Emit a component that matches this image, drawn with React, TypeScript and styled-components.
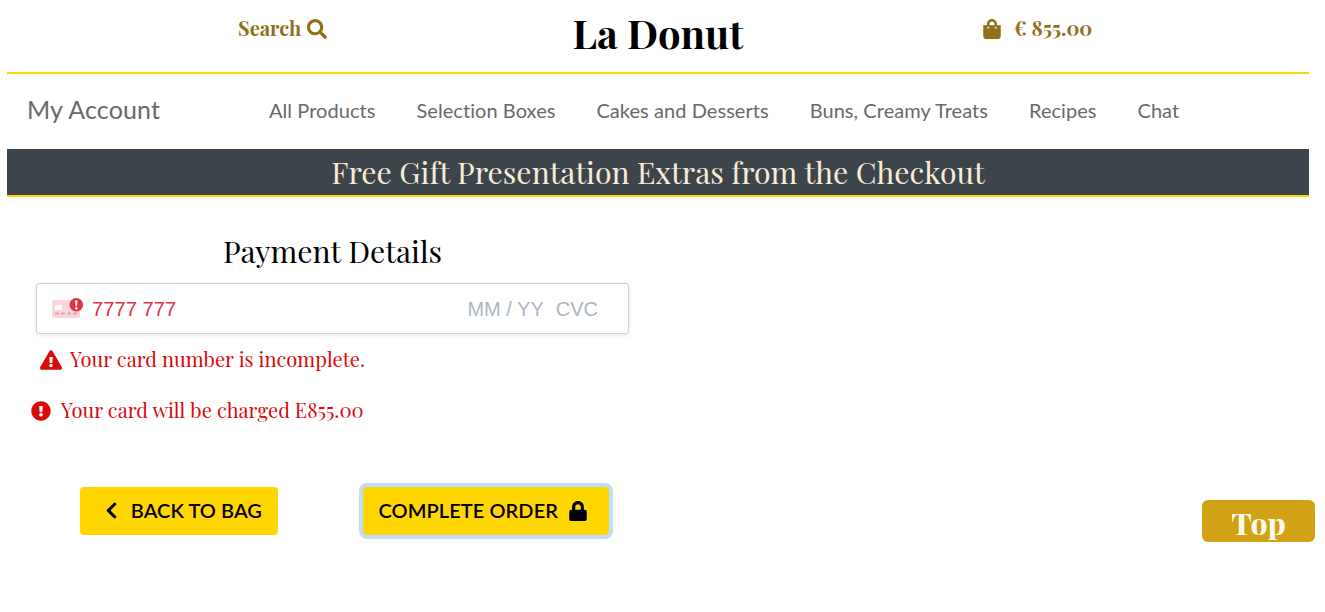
import React from 'react';
import styled, { createGlobalStyle } from 'styled-components';
import {
  FaSearch,
  FaShoppingBag,
  FaExclamationTriangle,
  FaExclamationCircle,
  FaChevronLeft,
  FaLock,
} from 'react-icons/fa';

const serif = `'Playfair Display', 'Liberation Serif', serif`;
const sans = `Lato, sans-serif`;

const GlobalStyle = createGlobalStyle`
  *, *::before, *::after { box-sizing: border-box; }
  body { margin: 0; background: #fff; }
  svg { display: block; flex: none; }
`;

const Page = styled.div`
  width: 1302px;
  min-height: 612px;
  margin-left: 7px;
  font-family: ${serif};
`;

const Header = styled.header`
  display: grid;
  grid-template-columns: 1fr 434px 1fr;
  height: 74px;
  border-bottom: 2px solid #ffd600;
`;

const HeaderLink = styled.a<{ $start: number; $gap: number }>`
  display: flex;
  align-items: center;
  gap: ${(p) => p.$gap}px;
  height: 57px;
  padding-left: ${(p) => p.$start}px;
  color: #906f1b;
  font-size: 20px;
  font-weight: 700;
  white-space: nowrap;
`;

const HeaderText = styled.span`
  padding-bottom: 2px;
`;

const Brand = styled.h1`
  margin: 0;
  padding-top: 9px;
  font-size: 40px;
  line-height: 48px;
  font-weight: 700;
  text-align: center;
  color: #000;
`;

const Nav = styled.nav`
  display: flex;
  align-items: center;
  height: 75px;
  padding: 0 0 5px 20px;
  font-family: ${sans};
  font-variant-ligatures: none;
  color: #696969;
`;

const Account = styled.a`
  width: 242px;
  padding-bottom: 1px;
  font-size: 25px;
  line-height: 32px;
  letter-spacing: 0.15px;
`;

const NavList = styled.div`
  display: flex;
  gap: 40.9px;
  padding-top: 2px;
`;

const NavItem = styled.a`
  font-size: 20px;
  line-height: 30px;
  letter-spacing: 0.06px;
  white-space: nowrap;
`;

const Banner = styled.div`
  height: 48px;
  background: #3d454c;
  border-bottom: 2px solid #ffd600;
  color: #faebd7;
  font-size: 30.2px;
  line-height: 45px;
  text-align: center;
`;

const Payment = styled.main`
  width: 593px;
  margin: 35px 0 0 29px;
`;

const Title = styled.h2`
  margin: 0;
  height: 51px;
  font-size: 30.2px;
  line-height: 38px;
  font-weight: 400;
  text-align: center;
  color: #000;
`;

const CardField = styled.div`
  display: flex;
  align-items: center;
  height: 51px;
  padding: 0 30px 0 15px;
  border: 1px solid #cbd3dc;
  border-radius: 3px;
  box-shadow: 0 1px 4px rgba(110, 130, 155, 0.18);
  font-family: 'Liberation Sans', Arial, sans-serif;
  font-size: 20px;
`;

const CardNumber = styled.span`
  flex: 1;
  padding: 2px 0 0 8px;
  letter-spacing: 0.1px;
  color: #dc3545;
`;

const CardHint = styled.span`
  margin-left: 12px;
  padding-top: 2px;
  color: #aab7c4;
`;

const Notice = styled.p<{ $shift: number; $gap: number }>`
  display: flex;
  align-items: center;
  gap: ${(p) => p.$gap}px;
  height: 51px;
  margin: 0 0 0 ${(p) => p.$shift}px;
  color: #db0808;
  font-size: 20.15px;
  white-space: nowrap;
`;

const NoticeText = styled.span`
  padding-bottom: 2px;
`;

const Actions = styled.div`
  display: flex;
  gap: 85px;
  margin: 51px 0 0 44px;
`;

const Button = styled.button<{ $width: number; $end: number; $focused?: boolean }>`
  display: flex;
  align-items: center;
  justify-content: flex-end;
  gap: 10px;
  width: ${(p) => p.$width}px;
  height: 48px;
  padding: 0 ${(p) => p.$end}px 1px 0;
  border: 0;
  border-radius: 4px;
  background: #ffd600;
  box-shadow: ${(p) => (p.$focused ? '0 0 0 4px #bfdcff' : 'none')};
  color: #000;
  font-family: ${sans};
  font-size: 20px;
  font-weight: 600;
  letter-spacing: 0.07px;
  white-space: nowrap;
`;

const ButtonLabel = styled.span`
  padding-bottom: 2px;
`;

const TopButton = styled.a`
  position: fixed;
  left: 1202px;
  top: 500px;
  width: 113px;
  height: 42px;
  border-radius: 6px;
  background: #d1a314;
  color: #fbf8ee;
  font-family: ${serif};
  font-size: 30px;
  font-weight: 800;
  line-height: 47px;
  text-align: center;
`;

const links = [
  'All Products',
  'Selection Boxes',
  'Cakes and Desserts',
  'Buns, Creamy Treats',
  'Recipes',
  'Chat',
];

const CardErrorIcon = () => (
  <svg width="32" height="22" viewBox="0 0 32 22">
    <rect x="0" y="2" width="28" height="18" rx="2.5" fill="#f8d6da" />
    <rect x="3" y="7" width="7" height="5" rx="1" fill="#fff" />
    <path d="M3 15.5h22" stroke="#eda0a8" strokeWidth="2" strokeDasharray="4 2" />
    <circle cx="24.3" cy="6.8" r="6.8" fill="#dc3545" />
    <path d="M23.1 2.5h2.4l-.4 5.6h-1.6z" fill="#fff" />
    <circle cx="24.3" cy="10.3" r="1.2" fill="#fff" />
  </svg>
);

export default function App() {
  return (
    <>
      <GlobalStyle />
      <Page>
        <Header>
          <HeaderLink $start={231} $gap={6}>
            <HeaderText>Search</HeaderText>
            <FaSearch size={20} />
          </HeaderLink>
          <Brand>La Donut</Brand>
          <HeaderLink $start={107} $gap={12}>
            <FaShoppingBag size={20} />
            <HeaderText>€ 855.00</HeaderText>
          </HeaderLink>
        </Header>
        <Nav>
          <Account>My Account</Account>
          <NavList>
            {links.map((label) => (
              <NavItem key={label}>{label}</NavItem>
            ))}
          </NavList>
        </Nav>
        <Banner>Free Gift Presentation Extras from the Checkout</Banner>
        <Payment>
          <Title>Payment Details</Title>
          <CardField>
            <CardErrorIcon />
            <CardNumber>7777 777</CardNumber>
            <CardHint>MM / YY</CardHint>
            <CardHint>CVC</CardHint>
          </CardField>
          <Notice $shift={4} $gap={8}>
            <FaExclamationTriangle size={22} />
            <NoticeText>Your card number is incomplete.</NoticeText>
          </Notice>
          <Notice $shift={-5} $gap={10}>
            <FaExclamationCircle size={20} />
            <NoticeText>Your card will be charged E855.00</NoticeText>
          </Notice>
          <Actions>
            <Button $width={198} $end={16}>
              <FaChevronLeft size={19} />
              <ButtonLabel>BACK TO BAG</ButtonLabel>
            </Button>
            <Button $width={246} $end={21} $focused>
              <ButtonLabel>COMPLETE ORDER</ButtonLabel>
              <FaLock size={20} />
            </Button>
          </Actions>
        </Payment>
        <TopButton>Top</TopButton>
      </Page>
    </>
  );
}
